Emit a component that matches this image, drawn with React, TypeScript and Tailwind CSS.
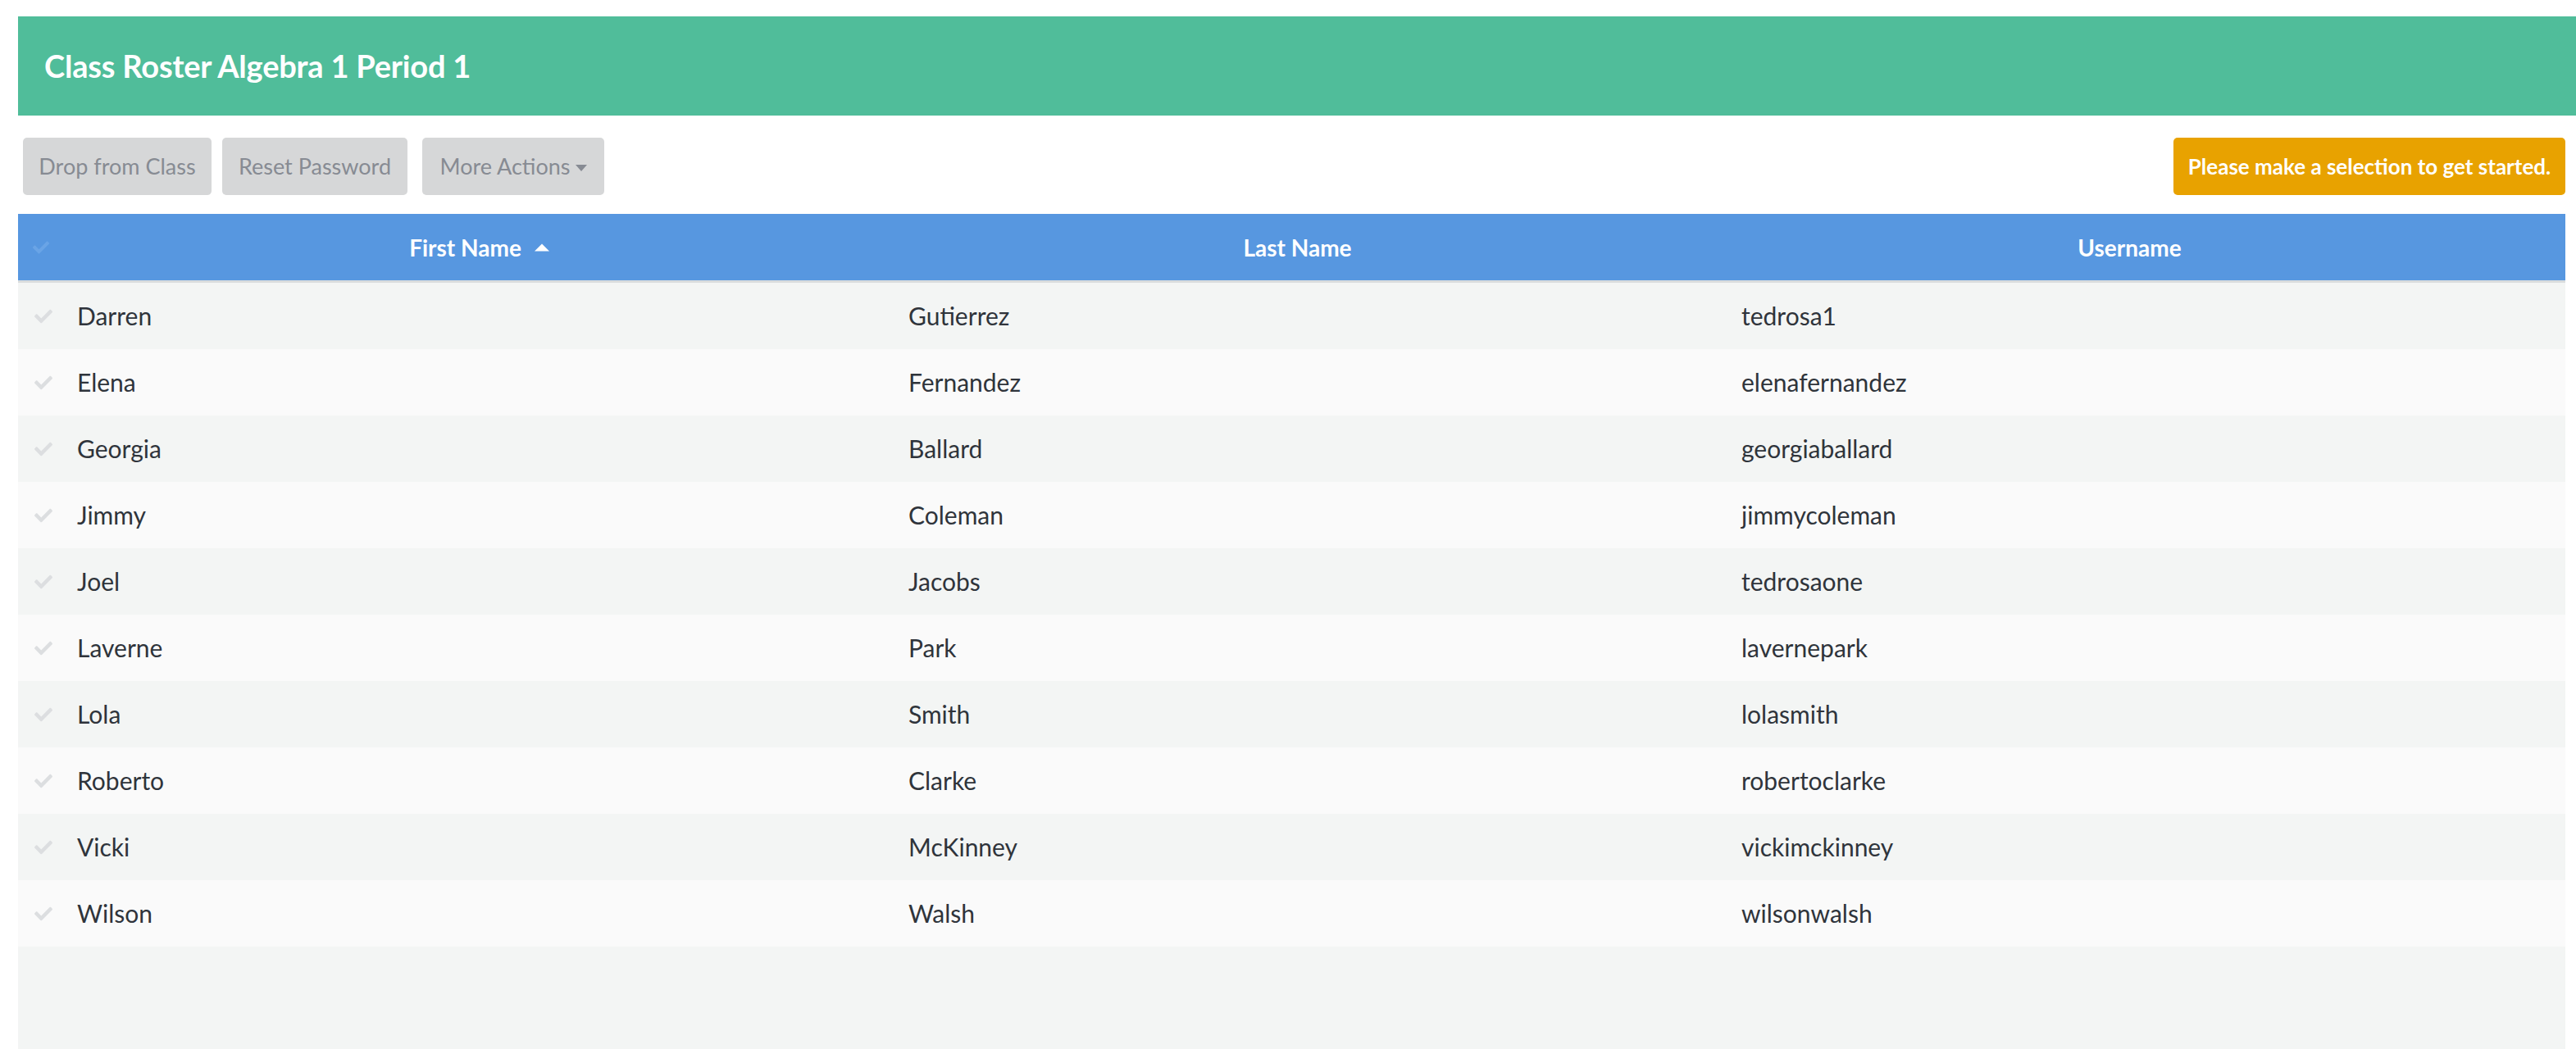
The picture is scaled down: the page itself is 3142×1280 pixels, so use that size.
import { FaCheck } from 'react-icons/fa'

const students = [
  { first: 'Darren', last: 'Gutierrez', username: 'tedrosa1' },
  { first: 'Elena', last: 'Fernandez', username: 'elenafernandez' },
  { first: 'Georgia', last: 'Ballard', username: 'georgiaballard' },
  { first: 'Jimmy', last: 'Coleman', username: 'jimmycoleman' },
  { first: 'Joel', last: 'Jacobs', username: 'tedrosaone' },
  { first: 'Laverne', last: 'Park', username: 'lavernepark' },
  { first: 'Lola', last: 'Smith', username: 'lolasmith' },
  { first: 'Roberto', last: 'Clarke', username: 'robertoclarke' },
  { first: 'Vicki', last: 'McKinney', username: 'vickimckinney' },
  { first: 'Wilson', last: 'Walsh', username: 'wilsonwalsh' },
]

function ToolbarButton({ label, width, caret }: { label: string; width: string; caret?: boolean }) {
  return (
    <button
      className={`${width} h-[70px] rounded-[5px] bg-[#d6d7d8] text-[27px] text-[#878b93] flex items-center justify-center gap-[6px]`}
    >
      {label}
      {caret && (
        <span className="inline-block w-0 h-0 border-x-[7px] border-x-transparent border-t-[8px] border-t-[#878b93] mt-[3px]" />
      )}
    </button>
  )
}

export default function App() {
  return (
    <div className="min-h-screen flex flex-col bg-white pt-[20px] pl-[22px] font-['Lato','Noto_Sans',sans-serif]">
      {/* Title bar */}
      <div className="h-[121px] bg-[#50bd9a] flex items-center pl-[32px]">
        <h1 className="text-white font-bold text-[38px] tracking-[-0.2px]">Class Roster Algebra 1 Period 1</h1>
      </div>

      {/* Actions */}
      <div className="mt-[27px] pr-[13px] flex items-center justify-between">
        <div className="flex items-center pl-[6px]">
          <ToolbarButton label="Drop from Class" width="w-[230px]" />
          <div className="ml-[13px]">
            <ToolbarButton label="Reset Password" width="w-[226px]" />
          </div>
          <div className="ml-[18px]">
            <ToolbarButton label="More Actions" width="w-[222px]" caret />
          </div>
        </div>
        <div className="w-[478px] h-[70px] rounded-[5px] bg-[#e8a200] text-white font-bold text-[26px] flex items-center justify-center">
          Please make a selection to get started.
        </div>
      </div>

      {/* Table */}
      <div className="mt-[23px] mr-[13px] flex-1 flex flex-col bg-[#f3f5f4]">
        <div className="grid grid-cols-[38px_1015px_1015px_1015px_1fr] h-[84px] bg-[#5797e0] border-b-[3px] border-[#d9dcdd] text-white font-bold text-[28px]">
          <div className="flex items-center pl-[18px]">
            <FaCheck className="w-[26px] h-[22px] text-[#6aa4e6]" />
          </div>
          <div className="flex items-center justify-center">
            <span className="relative">
              First Name
              <span className="absolute left-full top-1/2 -translate-y-1/2 ml-[16px] w-0 h-0 border-x-[9px] border-x-transparent border-b-[9px] border-b-white" />
            </span>
          </div>
          <div className="flex items-center justify-center">Last Name</div>
          <div className="flex items-center justify-center">Username</div>
          <div />
        </div>

        {students.map((s, i) => (
          <div
            key={s.username}
            className={`grid grid-cols-[58px_1014px_1016px_1fr] h-[81px] text-[30px] text-[#2f343b] ${i % 2 === 0 ? 'bg-[#f3f5f4]' : 'bg-[#fafafa]'}`}
          >
            <div className="flex items-center pl-[18px]">
              <FaCheck className="w-[26px] h-[22px] text-[#dcdee0]" />
            </div>
            <div className="flex items-center pl-[14px]">{s.first}</div>
            <div className="flex items-center pl-[14px]">{s.last}</div>
            <div className="flex items-center pl-[14px]">{s.username}</div>
          </div>
        ))}
      </div>
    </div>
  )
}
